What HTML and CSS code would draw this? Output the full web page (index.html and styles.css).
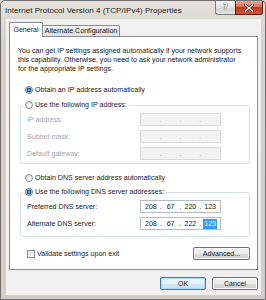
FILE: index.html
```html
<!DOCTYPE html>
<html>
<head>
<meta charset="utf-8">
<title>Internet Protocol Version 4 (TCP/IPv4) Properties</title>
<link rel="stylesheet" href="styles.css">
</head>
<body>
<div class="window">
  <div class="titlebar">
    <div class="title">Internet Protocol Version 4 (TCP/IPv4) Properties</div>
    <div class="caption-btns">
      <div class="cap help">?</div>
      <div class="cap close">
        <svg width="10" height="8" viewBox="0 0 10 8"><path d="M1.5 1 L8.5 7 M8.5 1 L1.5 7" stroke="#5a1b10" stroke-width="2.6" stroke-linecap="square"/><path d="M1.5 1 L8.5 7 M8.5 1 L1.5 7" stroke="#fff" stroke-width="1.4" stroke-linecap="square"/></svg>
      </div>
    </div>
  </div>
  <div class="client">
    <div class="tabs">
      <div class="tab active">General</div>
      <div class="tab">Alternate Configuration</div>
    </div>
    <div class="panel">
      <p class="intro">You can get IP settings assigned automatically if your network supports<br>this capability. Otherwise, you need to ask your network administrator<br>for the appropriate IP settings.</p>
      <div class="option opt-ip"><span class="radio on"></span>Obtain an IP address automatically</div>
      <fieldset class="group group-ip">
        <legend class="option-legend"><span class="radio"></span>Use the following IP address:</legend>
        <div class="row disabled"><span class="lbl">IP address:</span>
          <div class="ipfield"><span class="seg"></span><span class="dot">.</span><span class="seg"></span><span class="dot">.</span><span class="seg"></span><span class="dot">.</span><span class="seg"></span></div>
        </div>
        <div class="row disabled"><span class="lbl">Subnet mask:</span>
          <div class="ipfield"><span class="seg"></span><span class="dot">.</span><span class="seg"></span><span class="dot">.</span><span class="seg"></span><span class="dot">.</span><span class="seg"></span></div>
        </div>
        <div class="row disabled"><span class="lbl">Default gateway:</span>
          <div class="ipfield"><span class="seg"></span><span class="dot">.</span><span class="seg"></span><span class="dot">.</span><span class="seg"></span><span class="dot">.</span><span class="seg"></span></div>
        </div>
      </fieldset>
      <div class="option opt-dns"><span class="radio"></span>Obtain DNS server address automatically</div>
      <fieldset class="group group-dns">
        <legend class="option-legend"><span class="radio on"></span>Use the following DNS server addresses:</legend>
        <div class="row"><span class="lbl">Preferred DNS server:</span>
          <div class="ipfield"><span class="seg">208</span><span class="dot">.</span><span class="seg">67</span><span class="dot">.</span><span class="seg">220</span><span class="dot">.</span><span class="seg">123</span></div>
        </div>
        <div class="row"><span class="lbl">Alternate DNS server:</span>
          <div class="ipfield"><span class="seg">208</span><span class="dot">.</span><span class="seg">67</span><span class="dot">.</span><span class="seg">222</span><span class="dot">.</span><span class="seg"><span class="sel">123</span></span></div>
        </div>
      </fieldset>
      <div class="bottom-row">
        <label class="check"><span class="checkbox"></span>Validate settings upon exit</label>
        <button class="btn adv">Advanced...</button>
      </div>
    </div>
    <div class="buttons">
      <button class="btn default">OK</button>
      <button class="btn">Cancel</button>
    </div>
  </div>
</div>
</body>
</html>
```

FILE: styles.css
```css
* { box-sizing: border-box; }
html, body { margin: 0; padding: 0; }
body {
  width: 266px;
  height: 300px;
  overflow: hidden;
  font-family: "Liberation Sans", Arial, sans-serif;
  font-size: 7.1px;
  color: #1a1a1a;
  background: #d6d3ce;
}
.window {
  width: 266px;
  height: 300px;
  display: flex;
  flex-direction: column;
  background: linear-gradient(#e4e2de, #d5d2cc 40px, #d2cfc9);
  border: 1px solid #707070;
  border-radius: 5px 5px 0 0;
}
.titlebar {
  flex: none;
  height: 18px;
  display: flex;
  align-items: flex-start;
  padding-left: 4px;
}
.title {
  flex: 1;
  margin-top: 5px;
  font-size: 8.1px;
  color: #1e1e1e;
  white-space: nowrap;
}
.caption-btns { display: flex; margin-right: 2px; }
.cap {
  height: 14px;
  display: flex;
  align-items: center;
  justify-content: center;
  border: 1px solid #7d7d7d;
  border-top: none;
}
.help {
  width: 20px;
  border-right: none;
  border-radius: 0 0 0 3px;
  background: linear-gradient(#f5f5f5, #e2e2e2 50%, #d2d2d2 51%, #e4e4e4);
  color: #f4f4f4;
  font-family: "DejaVu Sans", sans-serif;
  font-size: 8px;
  font-weight: bold;
  text-shadow: 0 0 1px #555, 0 0 1px #555;
}
.close {
  width: 28px;
  border-color: #5b1f12;
  border-radius: 0 0 3px 0;
  background: linear-gradient(#eaa899, #d7735c 45%, #c23a1c 50%, #cf5436);
}
.client {
  flex: 1;
  margin: 0 4px 4px 5px;
  background: #f0f0f0;
  padding: 3px 3px 0 3px;
  display: flex;
  flex-direction: column;
}
.tabs {
  flex: none;
  display: flex;
  height: 14px;
  position: relative;
  z-index: 1;
}
.tab {
  width: 77px;
  height: 11px;
  margin-top: 3px;
  border: 1px solid #898c95;
  border-left: none;
  border-bottom: none;
  border-radius: 0 2px 0 0;
  background: linear-gradient(#f3f3f3, #ebebeb 50%, #dddddd 51%, #e5e5e5);
  display: flex;
  align-items: center;
  justify-content: center;
  white-space: nowrap;
}
.tab.active {
  width: 34px;
  height: 15px;
  margin-top: 0;
  border-left: 1px solid #898c95;
  border-radius: 2px 2px 0 0;
  background: #fff;
  padding-bottom: 1px;
}
.panel {
  flex: none;
  height: 234px;
  border: 1px solid #898c95;
  background: #fff;
  padding: 10px 7px 0 10px;
}
.intro {
  margin: 0 0 0 -2px;
  line-height: 9px;
  white-space: nowrap;
}
.option {
  display: flex;
  align-items: center;
  height: 10px;
  margin-left: 5px;
  white-space: nowrap;
}
.opt-ip { margin-top: 11px; }
.opt-dns { margin-top: 9px; }
.radio {
  flex: none;
  width: 8px;
  height: 8px;
  margin-right: 2px;
  border-radius: 50%;
  border: 1px solid #8e8f8f;
  background: radial-gradient(circle at 60% 65%, #ffffff 0, #ececec 40%, #cfcfcf 100%);
}
.radio.on {
  border-color: #5d7b95;
  background: radial-gradient(circle at 50% 50%, #9ccbef 0, #2f6ea6 1.4px, #1b4e7d 2.2px, #e9eef2 2.7px, #d6dbe0 100%);
}
.group {
  margin: 5px 0 0 0;
  padding: 3px 0 3px 6px;
  border: 1px solid #d5dfe5;
  border-radius: 3px;
  min-width: 0;
}
.group-dns { margin-top: 4px; padding-bottom: 6px; }
.option-legend {
  display: flex;
  align-items: center;
  height: 10px;
  margin-left: -4px;
  padding: 0 2px;
  white-space: nowrap;
}
.row {
  display: flex;
  align-items: center;
  height: 13px;
}
.row + .row { margin-top: 4px; }
.lbl { width: 113px; flex: none; white-space: nowrap; }
.row.disabled .lbl { color: #a3a3a3; }
.ipfield {
  width: 81px;
  height: 13px;
  border: 1px solid #b6bcc6;
  background: #fff;
  display: flex;
  align-items: center;
}
.row.disabled .ipfield {
  border-color: #dadada;
  background: #f2f2f2;
  color: #9a9a9a;
}
.seg { flex: 1; text-align: center; }
.dot { width: 0; display: flex; justify-content: center; }
.sel { background: #3399ff; color: #fff; padding: 1px 1px; }
.bottom-row {
  display: flex;
  align-items: center;
  justify-content: space-between;
  height: 13px;
  margin-top: 10px;
}
.check {
  display: flex;
  align-items: center;
  margin-left: 7px;
  white-space: nowrap;
}
.checkbox {
  width: 8px;
  height: 8px;
  margin-right: 2px;
  border: 1px solid #8e8f8f;
  background: linear-gradient(135deg, #d9d9d9, #f6f6f6);
  box-shadow: inset 0 0 0 1px #f4f4f4;
}
.btn {
  height: 13px;
  padding: 0;
  border: 1px solid #707070;
  border-radius: 2px;
  background: linear-gradient(#f3f3f3, #ebebeb 50%, #dddddd 51%, #cfcfcf);
  box-shadow: inset 0 0 0 1px #fbfbfb;
  font-family: inherit;
  font-size: 7.1px;
  color: #1a1a1a;
}
.adv { width: 57px; }
.buttons {
  flex: none;
  display: flex;
  justify-content: flex-end;
  gap: 6px;
  margin-top: 7px;
}
.buttons .btn { width: 46px; }
.btn.default {
  border-color: #3c7fb1;
  box-shadow: inset 0 0 0 1px #a9dbf6;
  background: linear-gradient(#eef6fb, #e3f0f8 50%, #d2e8f5 51%, #c6e1f2);
}
```
